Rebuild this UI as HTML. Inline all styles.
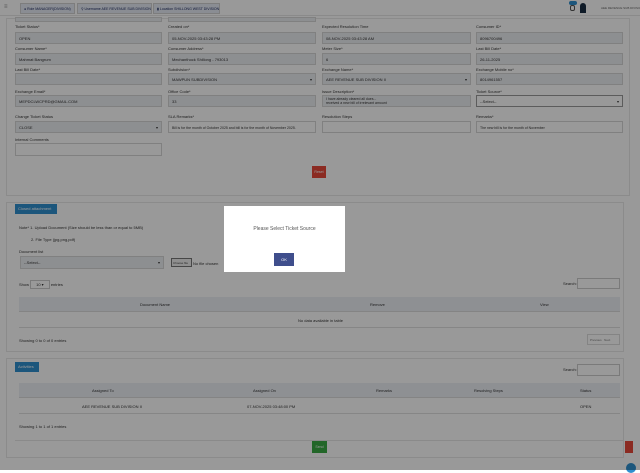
<!DOCTYPE html>
<html><head><meta charset="utf-8"><style>
*{box-sizing:border-box;margin:0;padding:0}
html,body{background:#fff}
body{width:640px;height:470px;overflow:hidden;font-family:"Liberation Sans",sans-serif;font-size:4px;color:#444;position:relative}
.a{position:absolute;white-space:nowrap}
.lbl{position:absolute;font-size:4px;color:#333;white-space:nowrap}
.f{position:absolute;height:12px;background:#eceef2;border:1px solid #d6d6d6;font-size:4px;color:#333;padding:4px 3px;white-space:nowrap;overflow:hidden;line-height:4px}
.w{background:#fff}
.pill{position:absolute;top:3px;height:11px;background:#e6ebf5;border:1px solid #d0d0d0;font-size:3.5px;padding:3px 3px;color:#1d2a60;white-space:nowrap;overflow:hidden;line-height:4px}
.tag{position:absolute;background:#2f8fcf;color:#fff;font-size:4px;padding:3px 3px;height:10px;white-space:nowrap;overflow:hidden;line-height:4px}
#ov{position:absolute;left:0;top:0;width:640px;height:470px;background:rgba(0,0,0,0.4)}
</style></head><body>
<div class="a" style="left:0;top:0;width:640px;height:16px;background:#fff;border-bottom:1px solid #e6e6e6"></div>
<div class="a" style="left:4px;top:4px;color:#888;font-size:6px">≡</div>
<div class="pill" style="left:20px;width:55px">● Role MANAGER(DIVISION)</div>
<div class="pill" style="left:77px;width:75px">⚲ Username AEE REVENUE SUB DIVISION I</div>
<div class="pill" style="left:153px;width:67px">▮ Location SHILLONG WEST DIVISION</div>
<div class="a" style="left:569px;top:1px;width:8px;height:4px;background:#2f8fcf;border-radius:2px"></div>
<div class="a" style="left:570px;top:5px;width:5px;height:6px;border:1px solid #555;border-radius:2px"></div>
<div class="a" style="left:580px;top:3px;width:6px;height:10px;background:#1a2e44;border-radius:3px 3px 0 0"></div>
<div class="a" style="left:601px;top:6px;font-size:3px;color:#666">AEE REVENUE SUB DIVISION I</div>

<div class="a" style="left:6px;top:18px;width:624px;height:178px;border:1px solid #e8e8e8"></div>
<div class="a" style="left:15px;top:17px;width:147px;height:5px;background:#eceef2;border:1px solid #d6d6d6"></div>
<div class="a" style="left:168px;top:17px;width:148px;height:5px;background:#eceef2;border:1px solid #d6d6d6"></div>

<div class="lbl" style="left:15px;top:24px">Ticket Status*</div>
<div class="lbl" style="left:168px;top:24px">Created on*</div>
<div class="lbl" style="left:322px;top:24px">Expected Resolution Time</div>
<div class="lbl" style="left:476px;top:24px">Consumer ID*</div>
<div class="f" style="left:15px;top:32px;width:147px">OPEN</div>
<div class="f" style="left:168px;top:32px;width:148px">05-NOV-2025 03:43:28 PM</div>
<div class="f" style="left:322px;top:32px;width:149px">08-NOV-2025 03:43:28 AM</div>
<div class="f" style="left:476px;top:32px;width:147px">8096700496</div>

<div class="lbl" style="left:15px;top:46px">Consumer Name*</div>
<div class="lbl" style="left:168px;top:46px">Consumer Address*</div>
<div class="lbl" style="left:322px;top:46px">Meter Size*</div>
<div class="lbl" style="left:476px;top:46px">Last Bill Date*</div>
<div class="f" style="left:15px;top:53px;width:147px">Mahmat Bangrum</div>
<div class="f" style="left:168px;top:53px;width:148px">Mechanthock Shillong - 793013</div>
<div class="f" style="left:322px;top:53px;width:149px">6</div>
<div class="f" style="left:476px;top:53px;width:147px">26-11-2025</div>

<div class="lbl" style="left:15px;top:67px">Last Bill Date*</div>
<div class="lbl" style="left:168px;top:67px">Subdivision*</div>
<div class="lbl" style="left:322px;top:67px">Exchange Name*</div>
<div class="lbl" style="left:476px;top:67px">Exchange Mobile no*</div>
<div class="f" style="left:15px;top:73px;width:147px"></div>
<div class="f" style="left:168px;top:73px;width:148px">MAWPUN SUBDIVISION<span style="float:right">▾</span></div>
<div class="f" style="left:322px;top:73px;width:149px">AEE REVENUE SUB DIVISION II<span style="float:right">▾</span></div>
<div class="f" style="left:476px;top:73px;width:147px">8014961557</div>

<div class="lbl" style="left:15px;top:89px">Exchange Email*</div>
<div class="lbl" style="left:168px;top:89px">Office Code*</div>
<div class="lbl" style="left:322px;top:89px">Issue Description*</div>
<div class="lbl" style="left:476px;top:89px">Ticket Source*</div>
<div class="f" style="left:15px;top:95px;width:147px">MEPDCLWCPRD@GMAIL.COM</div>
<div class="f" style="left:168px;top:95px;width:148px">33</div>
<div class="f" style="left:322px;top:95px;width:149px;padding:1px 3px;line-height:4px;font-size:3.5px">I have already cleared all dues...<br>received a new bill of irrelevant amount</div>
<div class="f w" style="left:476px;top:95px;width:147px;border-color:#999">--Select--<span style="float:right">▾</span></div>

<div class="lbl" style="left:15px;top:114px">Change Ticket Status</div>
<div class="lbl" style="left:168px;top:114px">SLA Remarks*</div>
<div class="lbl" style="left:322px;top:114px">Resolution Steps</div>
<div class="lbl" style="left:476px;top:114px">Remarks*</div>
<div class="f" style="left:15px;top:121px;width:147px">CLOSE<span style="float:right">▾</span></div>
<div class="f w" style="left:168px;top:121px;width:148px;font-size:3.5px">Bill is for the month of October 2025 and bill is for the month of November 2025.</div>
<div class="f w" style="left:322px;top:121px;width:149px"></div>
<div class="f w" style="left:476px;top:121px;width:147px;font-size:3.5px">The new bill is for the month of November</div>

<div class="lbl" style="left:15px;top:137px">Internal Comments</div>
<div class="f w" style="left:15px;top:143px;width:147px;height:13px"></div>

<div class="a" style="left:312px;top:166px;width:14px;height:12px;background:#e8493a;color:#fff;font-size:3.5px;text-align:center;line-height:12px">Reset</div>

<div class="a" style="left:6px;top:202px;width:618px;height:150px;border:1px solid #e8e8e8"></div>
<div class="tag" style="left:15px;top:204px;width:42px">Closed attachment</div>
<div class="lbl" style="left:19px;top:225px">Note* 1. Upload Document (Size should be less than or equal to 5MB)</div>
<div class="lbl" style="left:31px;top:237px">2. File Type (jpg,png,pdf)</div>
<div class="lbl" style="left:19px;top:249px">Document list</div>
<div class="f" style="left:20px;top:256px;width:144px;height:13px">--Select--<span style="float:right">▾</span></div>
<div class="a" style="left:171px;top:258px;width:21px;height:9px;border:1px solid #777;background:#eee;font-size:3px;padding:2px 1px;overflow:hidden;line-height:4px">Choose file</div>
<div class="lbl" style="left:193px;top:261px">No file chosen</div>
<div class="lbl" style="left:19px;top:282px">Show <span style="border:1px solid #ccc;padding:1px 5px">10 ▾</span> entries</div>
<div class="lbl" style="left:563px;top:281px">Search:</div>
<div class="a" style="left:577px;top:278px;width:43px;height:11px;border:1px solid #ccc"></div>
<div class="a" style="left:19px;top:297px;width:601px;height:15px;background:#edf0f6;border-bottom:1px solid #ddd"></div>
<div class="lbl" style="left:140px;top:302px">Document Name</div>
<div class="lbl" style="left:370px;top:302px">Remove</div>
<div class="lbl" style="left:540px;top:302px">View</div>
<div class="lbl" style="left:298px;top:318px">No data available in table</div>
<div class="a" style="left:19px;top:327px;width:601px;height:1px;background:#e0e0e0"></div>
<div class="lbl" style="left:19px;top:338px">Showing 0 to 0 of 0 entries</div>
<div class="a" style="left:587px;top:334px;width:33px;height:11px;border:1px solid #ddd;font-size:3px;padding:3px 2px;color:#777;overflow:hidden;line-height:4px">Previous &nbsp; Next</div>

<div class="a" style="left:6px;top:358px;width:618px;height:100px;border:1px solid #e8e8e8"></div>
<div class="tag" style="left:15px;top:362px;width:24px">Activities</div>
<div class="lbl" style="left:563px;top:367px">Search:</div>
<div class="a" style="left:577px;top:364px;width:43px;height:12px;border:1px solid #ccc"></div>
<div class="a" style="left:19px;top:383px;width:601px;height:15px;background:#edf0f6;border-bottom:1px solid #ddd"></div>
<div class="lbl" style="left:92px;top:388px">Assigned To</div>
<div class="lbl" style="left:253px;top:388px">Assigned On</div>
<div class="lbl" style="left:376px;top:388px">Remarks</div>
<div class="lbl" style="left:474px;top:388px">Resolving Steps</div>
<div class="lbl" style="left:580px;top:388px">Status</div>
<div class="lbl" style="left:82px;top:404px">AEE REVENUE SUB DIVISION II</div>
<div class="lbl" style="left:247px;top:404px">07-NOV-2025 03:48:00 PM</div>
<div class="lbl" style="left:580px;top:404px">OPEN</div>
<div class="a" style="left:19px;top:413px;width:601px;height:1px;background:#e0e0e0"></div>
<div class="lbl" style="left:19px;top:424px">Showing 1 to 1 of 1 entries</div>
<div class="a" style="left:15px;top:440px;width:608px;height:1px;background:#e6e6e6"></div>
<div class="a" style="left:312px;top:441px;width:15px;height:12px;background:#3aaa44;color:#fff;font-size:3.5px;text-align:center;line-height:12px">Send</div>
<div class="a" style="left:625px;top:441px;width:8px;height:12px;background:#e8493a"></div>
<div class="a" style="left:626px;top:463px;width:10px;height:10px;border-radius:50%;background:#2f8fcf"></div>

<div id="ov"></div>

<div class="a" style="left:224px;top:206px;width:121px;height:66px;background:#fff"></div>
<div class="a" style="left:224px;top:226px;width:121px;text-align:center;font-size:5px;color:#555">Please Select Ticket Source</div>
<div class="a" style="left:274px;top:253px;width:20px;height:13px;background:#3f4e8c;color:#fff;font-size:4px;text-align:center;line-height:13px">OK</div>
</body></html>
